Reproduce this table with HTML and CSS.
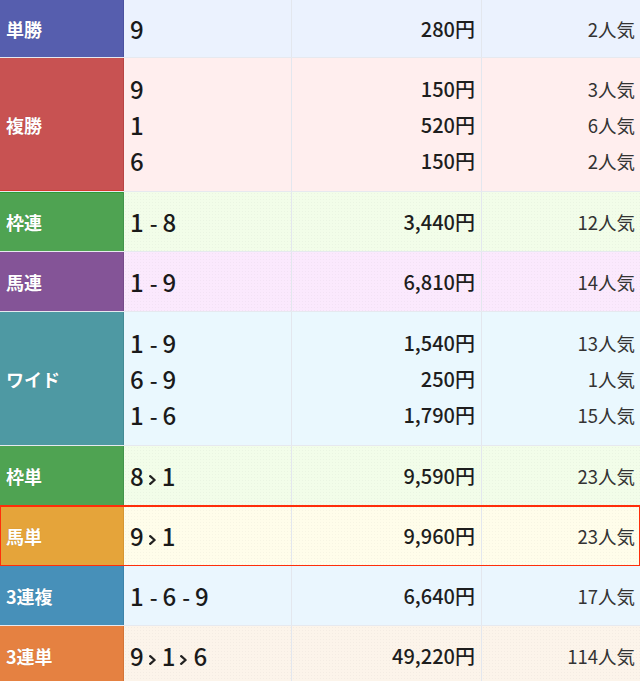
FILE: index.html
```html
<!DOCTYPE html>
<html lang="ja">
<head>
<meta charset="utf-8">
<title>払戻金</title>
<link rel="stylesheet" href="styles.css">
</head>
<body>
<div class="payout">
  <div class="row r-tansho first">
    <div class="label">単勝</div>
    <div class="cell num"><div class="ln">9</div></div>
    <div class="cell yen"><div class="ln">280円</div></div>
    <div class="cell pop"><div class="ln">2人気</div></div>
  </div>
  <div class="row r-fukusho multi">
    <div class="label">複勝</div>
    <div class="cell num"><div class="ln">9</div><div class="ln">1</div><div class="ln">6</div></div>
    <div class="cell yen"><div class="ln">150円</div><div class="ln">520円</div><div class="ln">150円</div></div>
    <div class="cell pop"><div class="ln">3人気</div><div class="ln">6人気</div><div class="ln">2人気</div></div>
  </div>
  <div class="row r-wakuren dots">
    <div class="label">枠連</div>
    <div class="cell num"><div class="ln">1<span class="sep">-</span>8</div></div>
    <div class="cell yen"><div class="ln">3,440円</div></div>
    <div class="cell pop"><div class="ln">12人気</div></div>
  </div>
  <div class="row r-umaren dots">
    <div class="label">馬連</div>
    <div class="cell num"><div class="ln">1<span class="sep">-</span>9</div></div>
    <div class="cell yen"><div class="ln">6,810円</div></div>
    <div class="cell pop"><div class="ln">14人気</div></div>
  </div>
  <div class="row r-wide multi">
    <div class="label">ワイド</div>
    <div class="cell num"><div class="ln">1<span class="sep">-</span>9</div><div class="ln">6<span class="sep">-</span>9</div><div class="ln">1<span class="sep">-</span>6</div></div>
    <div class="cell yen"><div class="ln">1,540円</div><div class="ln">250円</div><div class="ln">1,790円</div></div>
    <div class="cell pop"><div class="ln">13人気</div><div class="ln">1人気</div><div class="ln">15人気</div></div>
  </div>
  <div class="row r-wakutan dots">
    <div class="label">枠単</div>
    <div class="cell num"><div class="ln">8<svg class="chev" viewBox="0 0 7 10" aria-hidden="true"><path d="M1.2 1.2 L5.6 5 L1.2 8.8"/></svg>1</div></div>
    <div class="cell yen"><div class="ln">9,590円</div></div>
    <div class="cell pop"><div class="ln">23人気</div></div>
  </div>
  <div class="row r-umatan dots hit">
    <div class="label">馬単</div>
    <div class="cell num"><div class="ln">9<svg class="chev" viewBox="0 0 7 10" aria-hidden="true"><path d="M1.2 1.2 L5.6 5 L1.2 8.8"/></svg>1</div></div>
    <div class="cell yen"><div class="ln">9,960円</div></div>
    <div class="cell pop"><div class="ln">23人気</div></div>
  </div>
  <div class="row r-sanrenpuku">
    <div class="label">3連複</div>
    <div class="cell num"><div class="ln">1<span class="sep">-</span>6<span class="sep">-</span>9</div></div>
    <div class="cell yen"><div class="ln">6,640円</div></div>
    <div class="cell pop"><div class="ln">17人気</div></div>
  </div>
  <div class="row r-sanrentan dots last">
    <div class="label">3連単</div>
    <div class="cell num"><div class="ln">9<svg class="chev" viewBox="0 0 7 10" aria-hidden="true"><path d="M1.2 1.2 L5.6 5 L1.2 8.8"/></svg>1<svg class="chev" viewBox="0 0 7 10" aria-hidden="true"><path d="M1.2 1.2 L5.6 5 L1.2 8.8"/></svg>6</div></div>
    <div class="cell yen"><div class="ln">49,220円</div></div>
    <div class="cell pop"><div class="ln">114人気</div></div>
  </div>
</div>
</body>
</html>
```

FILE: styles.css
```css
html, body {
  margin: 0;
  padding: 0;
  background: #ffffff;
}

body {
  font-family: "Noto Sans CJK JP", "Noto Sans", sans-serif;
  color: #222222;
  width: 640px;
  height: 681px;
  overflow: hidden;
}

.payout {
  display: flex;
  flex-direction: column;
  width: 640px;
}

.row {
  display: grid;
  grid-template-columns: 124px 168px 190px 158px;
  height: 59px;
  border-bottom: 1px solid #e6e9ef;
  box-sizing: content-box;
}

.row.first { height: 57px; }
.row.multi { height: 133px; }
.row.last { height: 60px; border-bottom: none; }

.label {
  display: flex;
  align-items: center;
  padding-left: 6px;
  color: #ffffff;
  font-weight: 700;
  font-size: 18px;
  letter-spacing: 0;
  text-shadow: 0 0 1px rgba(0, 0, 0, 0.2);
}

.cell {
  display: flex;
  flex-direction: column;
  justify-content: center;
  border-right: 1px solid #e3e7ee;
}

.cell.pop { border-right: none; }

.ln {
  line-height: 36px;
  height: 36px;
  white-space: nowrap;
}

.num {
  padding-left: 6px;
  font-size: 24px;
  font-weight: 500;
  color: #1a1a1a;
}

.num .ln {
  display: flex;
  align-items: center;
}

.sep {
  margin: 0 5px 0 6px;
  font-size: 22px;
}

.chev {
  width: 7px;
  height: 10px;
  margin: 8px 6px 0 5px;
  fill: none;
  stroke: #222222;
  stroke-width: 2.3;
  stroke-linecap: round;
  stroke-linejoin: round;
}

.yen {
  align-items: flex-end;
  padding-right: 6px;
  font-size: 20px;
  font-weight: 500;
  color: #1e1e1e;
}

.pop {
  align-items: flex-end;
  padding-right: 5px;
  font-size: 18.5px;
  font-weight: 400;
  color: #333333;
}

.dots .cell {
  background-image: radial-gradient(rgba(0, 0, 0, 0.03) 0.6px, transparent 0.8px);
  background-size: 3px 3px;
}

/* bet type colours */
.r-tansho .label { background: #565eae; box-shadow: inset -1px 0 0 #4a52a0; }
.r-tansho .cell { background-color: #ebf2fe; }

.r-fukusho .label { background: #c85252; box-shadow: inset -1px 0 0 #b84444, inset 0 -1px 0 #d63a32; }
.r-fukusho .cell { background-color: #ffeeee; }

.r-wakuren .label { background: #4fa352; box-shadow: inset -1px 0 0 #42944a, inset 0 1px 0 #2f9a36; }
.r-wakuren .cell { background-color: #f2fde9; }

.r-umaren .label { background: #845497; box-shadow: inset -1px 0 0 #764a8a; }
.r-umaren .cell { background-color: #fbe9fd; }

.r-wide .label { background: #4e99a3; box-shadow: inset -1px 0 0 #438b95; }
.r-wide .cell { background-color: #eaf8fe; }

.r-wakutan .label { background: #4fa352; box-shadow: inset -1px 0 0 #42944a; }
.r-wakutan .cell { background-color: #f2fde9; }

.r-umatan .label { background: #e5a43a; box-shadow: inset -1px 0 0 #d69632; }
.r-umatan .cell { background-color: #fffdea; }

.r-sanrenpuku .label { background: #4790b9; box-shadow: inset -1px 0 0 #3d83aa; }
.r-sanrenpuku .cell { background-color: #eaf6fe; }

.r-sanrentan .label { background: #e58141; box-shadow: inset -1px 0 0 #d47436; }
.r-sanrentan .cell { background-color: #fcf4ea; }

.hit {
  outline: 2px solid #ff2e0a;
  outline-offset: -1px;
}
```
